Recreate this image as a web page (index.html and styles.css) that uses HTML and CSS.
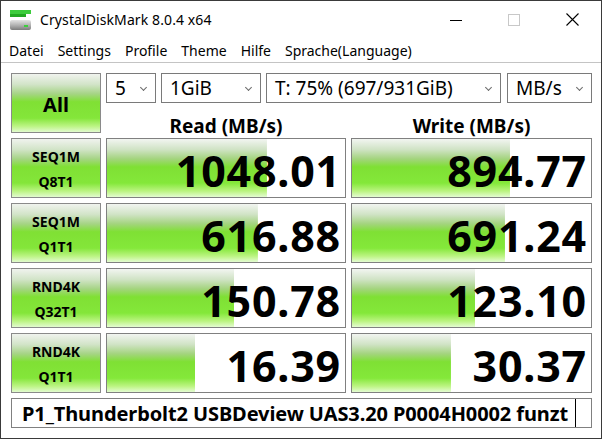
FILE: index.html
```html
<!DOCTYPE html>
<html lang="de">
<head>
    <meta charset="UTF-8">
    <meta name="viewport" content="width=device-width, initial-scale=1.0">
    <title>CrystalDiskMark 8.0.4 x64</title>
    <link rel="stylesheet" href="styles.css">
</head>
<body>
    <div class="window">
        <!-- Title bar -->
        <div class="titlebar">
            <svg class="app-icon" width="21" height="20" viewBox="0 0 21 20">
                <defs>
                    <linearGradient id="drive" x1="0" y1="0" x2="0" y2="1">
                        <stop offset="0" stop-color="#e4e4e4"/>
                        <stop offset="0.5" stop-color="#b4b4b4"/>
                        <stop offset="1" stop-color="#7c7c7c"/>
                    </linearGradient>
                </defs>
                <rect x="0" y="0" width="21" height="4" fill="#3ccc3c"/>
                <rect x="0" y="4" width="16" height="3" fill="#22a822"/>
                <rect x="0" y="10" width="21" height="10" rx="2" fill="url(#drive)"/>
                <rect x="14" y="15" width="4" height="2" fill="#3cd03c"/>
            </svg>
            <div class="title">CrystalDiskMark 8.0.4 x64</div>
            <div class="win-controls">
                <div class="win-btn">
                    <svg width="12" height="12" viewBox="0 0 12 12"><line x1="0" y1="6.5" x2="12" y2="6.5" stroke="#000" stroke-width="1"/></svg>
                </div>
                <div class="win-btn">
                    <svg width="12" height="12" viewBox="0 0 12 12"><rect x="0.5" y="0.5" width="11" height="11" fill="none" stroke="#c8c8c8" stroke-width="1"/></svg>
                </div>
                <div class="win-btn">
                    <svg width="13" height="13" viewBox="0 0 13 13"><path d="M0.5 0.5 L12.5 12.5 M12.5 0.5 L0.5 12.5" stroke="#000" stroke-width="1.1"/></svg>
                </div>
            </div>
        </div>

        <!-- Menu -->
        <div class="menubar">
            <span class="menu-item">Datei</span>
            <span class="menu-item">Settings</span>
            <span class="menu-item">Profile</span>
            <span class="menu-item">Theme</span>
            <span class="menu-item">Hilfe</span>
            <span class="menu-item">Sprache(Language)</span>
        </div>

        <!-- Client -->
        <div class="client">
            <div class="panel">
                <button class="all-btn">All</button>

                <div class="selects">
                    <div class="select sel-count">5<span class="chevron"></span></div>
                    <div class="select sel-size">1GiB<span class="chevron"></span></div>
                    <div class="select sel-drive">T: 75% (697/931GiB)<span class="chevron"></span></div>
                    <div class="select sel-unit">MB/s<span class="chevron"></span></div>
                </div>

                <div class="col-head">Read (MB/s)</div>
                <div class="col-head">Write (MB/s)</div>

                <button class="test-btn">SEQ1M<br>Q8T1</button>
                <div class="result" style="--w: 67.2%">1048.01</div>
                <div class="result" style="--w: 66.1%">894.77</div>

                <button class="test-btn">SEQ1M<br>Q1T1</button>
                <div class="result" style="--w: 63.4%">616.88</div>
                <div class="result" style="--w: 64%">691.24</div>

                <button class="test-btn">RND4K<br>Q32T1</button>
                <div class="result" style="--w: 53.4%">150.78</div>
                <div class="result" style="--w: 51.5%">123.10</div>

                <button class="test-btn">RND4K<br>Q1T1</button>
                <div class="result" style="--w: 37%">16.39</div>
                <div class="result" style="--w: 41.4%">30.37</div>
            </div>

            <div class="comment">
                <span class="comment-text">P1_Thunderbolt2 USBDeview UAS3.20 P0004H0002 funzt</span>
                <span class="caret"></span>
            </div>
        </div>
    </div>
</body>
</html>
```

FILE: styles.css
```css
* {
    margin: 0;
    padding: 0;
    box-sizing: border-box;
}

body {
    font-family: 'Noto Sans', 'Open Sans', sans-serif;
    background: #fff;
    color: #000;
    width: 602px;
    height: 439px;
    overflow: hidden;
}

.window {
    width: 602px;
    height: 439px;
    border: 1px solid #3a3a3a;
    display: flex;
    flex-direction: column;
    background: #fff;
}

/* Title bar */

.titlebar {
    height: 37px;
    display: flex;
    align-items: center;
}

.app-icon {
    margin-left: 9px;
    margin-top: 1px;
}

.title {
    margin-left: 9px;
    font-size: 14px;
    letter-spacing: 0.1px;
}

.win-controls {
    margin-left: auto;
    display: flex;
    height: 100%;
}

.win-btn {
    width: 58px;
    height: 100%;
    display: flex;
    align-items: center;
    justify-content: center;
}

/* Menu */

.menubar {
    height: 25px;
    display: flex;
    align-items: center;
    padding-left: 1px;
    border-bottom: 1px solid #c4c4c4;
}

.menu-item {
    font-size: 14px;
    padding: 0 7px;
}

/* Main panel */

.client {
    flex: 1;
    padding: 10px 9px 0 10px;
}

.panel {
    display: grid;
    grid-template-columns: 90px 240px 241px;
    grid-template-rows: 30px 25px repeat(4, 60px);
    column-gap: 5px;
    row-gap: 5px;
}

.all-btn,
.test-btn {
    font-family: 'Noto Sans', 'Open Sans', sans-serif;
    font-weight: 700;
    color: #000;
    border: 1px solid #8a8a8a;
    background: linear-gradient(to bottom, #f0f3ee 0%, #d2e4c8 18%, #a6d486 34%, #80e034 48%, #84e63a 76%, #bcf484 90%, #e2fbcf 100%);
    cursor: pointer;
}

.all-btn {
    grid-row: 1 / span 2;
    font-size: 20px;
    padding-top: 2px;
}

.test-btn {
    font-size: 14px;
    line-height: 25px;
    padding-top: 1px;
}

.selects {
    grid-column: 2 / span 2;
    display: flex;
    gap: 5px;
}

.select {
    height: 30px;
    border: 1px solid #7a7a7a;
    background: #fff;
    font-size: 19px;
    display: flex;
    align-items: center;
    padding-left: 8px;
    position: relative;
}

.sel-count { width: 50px; }
.sel-size { width: 100px; }
.sel-drive { width: 235px; margin-right: 1px; }
.sel-unit { width: 85px; }

.chevron {
    position: absolute;
    right: 9px;
    top: 11px;
    width: 5px;
    height: 5px;
    border-right: 1px solid #6a6a6a;
    border-bottom: 1px solid #6a6a6a;
    transform: rotate(45deg);
}

.col-head {
    font-size: 19px;
    font-weight: 700;
    text-align: center;
    line-height: 36px;
}

.result {
    border: 1px solid #808080;
    background-color: #fff;
    background-image: linear-gradient(to bottom, #f2f5f1 0%, #d0e3c5 18%, #a4d47f 34%, #7fe034 48%, #84e83a 76%, #bcf482 90%, #e4fcd2 100%);
    background-repeat: no-repeat;
    background-size: var(--w) 100%;
    font-size: 43px;
    font-weight: 700;
    display: flex;
    align-items: center;
    justify-content: flex-end;
    padding: 4px 4px 0 0;
    letter-spacing: 0.8px;
}

/* Comment */

.comment {
    margin-top: 5px;
    height: 30px;
    border: 1px solid #808080;
    display: flex;
    align-items: center;
    padding-left: 10px;
}

.comment-text {
    font-size: 20px;
    font-weight: 700;
    letter-spacing: -0.1px;
    white-space: nowrap;
}

.caret {
    width: 1px;
    height: 28px;
    background: #000;
    margin-left: auto;
    margin-right: 15px;
}
```
